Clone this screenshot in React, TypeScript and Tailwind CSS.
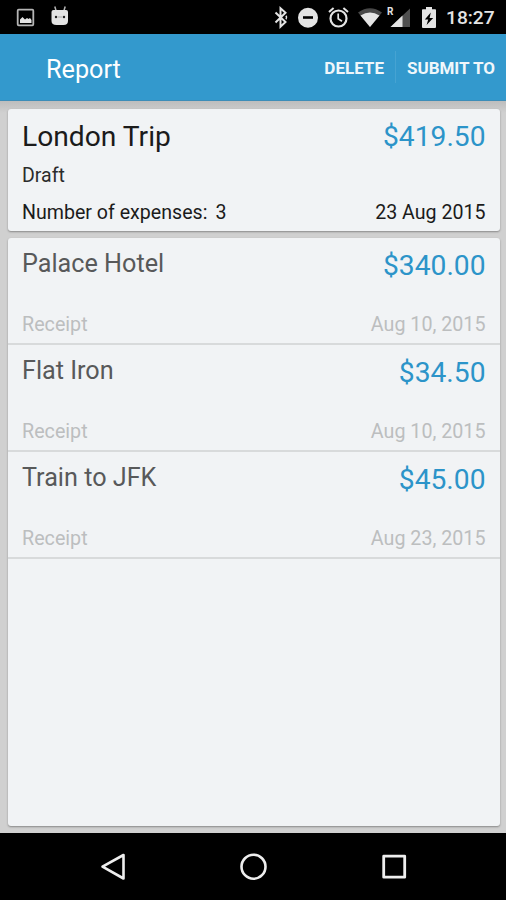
import React from 'react';

interface Expense {
  name: string;
  amount: string;
  date: string;
}

const expenses: Expense[] = [
  { name: 'Palace Hotel', amount: '$340.00', date: 'Aug 10, 2015' },
  { name: 'Flat Iron', amount: '$34.50', date: 'Aug 10, 2015' },
  { name: 'Train to JFK', amount: '$45.00', date: 'Aug 23, 2015' },
];

const StatusBar: React.FC = () => (
  <div className="flex h-[34px] shrink-0 items-center bg-black text-[#e4e4e4]">
    {/* Notifications */}
    <svg className="ml-4 h-[34px] w-[19px]" viewBox="0 0 19 34" fill="none">
      <rect x="1.7" y="9.7" width="15.6" height="15.6" rx="1" stroke="#b5b5b5" strokeWidth="1.8" />
      <path d="M4 23v-3.5l2.5-2.5 2.5 2.5 2-1.5 1.5 1 1.5-1 1.5 2v3z" fill="currentColor" />
    </svg>
    <svg className="ml-4 h-[34px] w-[18px]" viewBox="0 0 18 34" fill="none">
      <path d="M5 10.5 3.8 6.5M13 10.5l1.2-4" stroke="#b5b5b5" strokeWidth="1.5" />
      <path d="M.5 12q0-2 2-2h12.500q2 0 2 2v9q0 4-4.500 4h-7Q.5 25 .5 21z" fill="currentColor" />
      <circle cx="5" cy="17" r="1.2" fill="#222" />
      <circle cx="13" cy="17" r="1.2" fill="#222" />
      <path d="M6.500 17h5" stroke="#aaa" />
    </svg>

    {/* System icons */}
    <svg className="ml-auto h-[34px] w-[16px]" viewBox="0 0 16 34" fill="none">
      <path d="m1.500 12.500 10 9.500-5 4.700V8.300l5 4.400L1.500 22.500" stroke="currentColor" strokeWidth="2" />
      <path d="M12 15.800q1.200 1.700 0 3.400" stroke="currentColor" strokeWidth="1.600" />
    </svg>
    <svg className="ml-[7px] h-[34px] w-[22px]" viewBox="0 0 22 34">
      <circle cx="11" cy="17.700" r="10" fill="currentColor" />
      <path d="M6 16.200h10v2.600H6z" fill="#000" />
    </svg>
    <svg className="ml-2 h-[34px] w-[24px]" viewBox="0 0 24 34" fill="none" stroke="currentColor">
      <circle cx="11.500" cy="18.500" r="8" strokeWidth="2.200" />
      <path d="M11.200 13.500v5.300l3.800 2.400" strokeWidth="1.700" />
      <path d="m2 12 4.600-4M21 12l-4.600-4" strokeWidth="2" />
    </svg>
    <svg className="ml-[6px] h-[34px] w-[26px]" viewBox="0 0 26 34">
      <path d="M1 12.500Q13 4 25 12.500L13 27z" fill="#484848" />
      <path d="M3.500 15.500Q13 9.500 22.500 15.500L13 27z" fill="currentColor" />
    </svg>
    <div className="relative ml-1 h-[34px] w-[24px]">
      <svg className="h-[34px] w-[24px]" viewBox="0 0 24 34">
        <path d="M3.500 27 23 8.500V27z" fill="#505050" />
        <path d="M3.500 27 15.500 15.500V27z" fill="currentColor" />
      </svg>
      <span className="absolute left-0 top-[7px] text-[10px] font-bold leading-[10px]">R</span>
    </div>
    <svg className="ml-[10px] h-[34px] w-[16px]" viewBox="0 0 16 34">
      <path d="M5 7h6v2.200h3.200q.8 0 .8.800v17q0 1-1 1H2q-1 0-1-1V10q0-.8.800-.8H5z" fill="currentColor" />
      <path d="m9.800 12.500-6 7h3.400L5.600 25l6.600-7H8.600z" fill="#000" />
    </svg>
    <span className="ml-[9px] mr-[11px] w-[49px] whitespace-nowrap pt-[2px] text-[19.2px] font-medium leading-none">18:27</span>
  </div>
);

const Toolbar: React.FC = () => (
  <header className="flex h-[67px] shrink-0 items-center border-b border-[#3d8db8] bg-[#3399cd] pl-[46px] pr-[11px] text-white">
    <h1 className="pt-[5px] text-[25.2px] leading-8">Report</h1>
    <button className="ml-auto pt-[4px] text-[17px] font-bold text-[#f0f7fb]">DELETE</button>
    <span className="ml-[11px] mr-[11px] h-8 w-px bg-[#46a3d2]" />
    <button className="pt-[4px] text-[17px] font-bold text-[#f0f7fb]">SUBMIT TO</button>
  </header>
);

const ReportCard: React.FC = () => (
  <section className="h-[122px] shrink-0 rounded-[3px] bg-[#f1f3f5] pl-[14px] pr-[14.5px] pt-3 shadow-[0_1px_2px_rgba(0,0,0,0.35)]">
    <div className="flex justify-between text-[28.2px] leading-8">
      <h2 className="text-[#1b1b1b]">London Trip</h2>
      <span className="text-[#2c94c9]">$419.50</span>
    </div>
    <p className="mt-[11px] text-[19.5px] leading-6 text-[#2b2b2b]">Draft</p>
    <div className="mt-[13px] flex justify-between text-[19.6px] leading-6 text-[#1b1b1b]">
      <span>
        Number of expenses:<span className="ml-2">3</span>
      </span>
      <span>23 Aug 2015</span>
    </div>
  </section>
);

const ExpenseRow: React.FC<{ expense: Expense }> = ({ expense }) => (
  <li className="flex h-[107px] flex-col justify-between border-b-2 border-[#d8dadb] pb-[6px] pl-[14px] pr-[14.5px] pt-[11px]">
    <div className="flex justify-between">
      <h3 className="text-[25.2px] leading-[30px] text-[#58595a]">{expense.name}</h3>
      <span className="text-[28.2px] leading-[34px] text-[#2c94c9]">{expense.amount}</span>
    </div>
    <div className="flex justify-between text-[19.7px] leading-6 text-[#bcbebf]">
      <span>Receipt</span>
      <span>{expense.date}</span>
    </div>
  </li>
);

const NavBar: React.FC = () => (
  <nav className="flex h-[67px] shrink-0 items-center justify-between bg-black pl-[99px] pr-[98px] text-[#eeeeee]">
    <svg className="h-7 w-7" viewBox="0 0 28 28" fill="none" stroke="currentColor" strokeWidth="2.6" strokeLinejoin="round">
      <path d="M24.500 2v23.500L3.500 13.700z" />
    </svg>
    <svg className="h-7 w-7" viewBox="0 0 28 28" fill="none" stroke="currentColor" strokeWidth="2.6">
      <circle cx="13.500" cy="13.700" r="12" />
    </svg>
    <svg className="h-7 w-7" viewBox="0 0 28 28" fill="none" stroke="currentColor" strokeWidth="2.8" strokeLinejoin="round">
      <path d="M3.700 3.200h21v21h-21z" />
    </svg>
  </nav>
);

const App: React.FC = () => {
  return (
    <div className="flex h-[900px] w-[506px] flex-col overflow-hidden bg-[#d0d0d0] font-['Roboto',sans-serif]">
      <StatusBar />
      <Toolbar />
      <main className="flex flex-1 flex-col gap-[7px] bg-linear-to-b from-[#bdbdbd] to-[#d0d0d0] to-[12px] pb-[7px] pl-2 pr-[6px] pt-2">
        <ReportCard />
        <ul className="flex-1 rounded-[3px] bg-[#f1f3f5] shadow-[0_1px_2px_rgba(0,0,0,0.35)]">
          {expenses.map((expense) => (
            <ExpenseRow key={expense.name} expense={expense} />
          ))}
        </ul>
      </main>
      <NavBar />
    </div>
  );
};

export default App;
